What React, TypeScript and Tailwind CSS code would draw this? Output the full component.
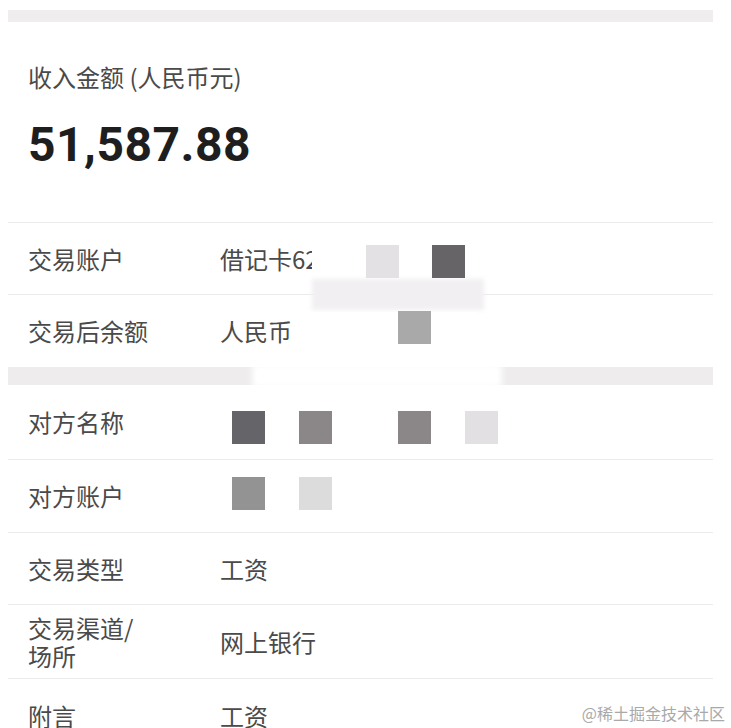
import React from "react";

const cjk = { fontFamily: '"Noto Sans CJK SC", "Noto Sans", sans-serif' };

function Row({
  label,
  value,
  h,
  border = true,
}: {
  label: React.ReactNode;
  value?: React.ReactNode;
  h: string;
  border?: boolean;
}) {
  return (
    <div
      className={`flex items-center pl-5 ${h} ${border ? "border-t border-[#ebebeb]" : ""}`}
    >
      <div className="w-[192px] text-[24px] leading-[30px] text-[#4a4a4a]">{label}</div>
      <div className="text-[24px] leading-[30px] text-[#4a4a4a]">{value}</div>
    </div>
  );
}

function Block({ x, y, c }: { x: number; y: number; c: string }) {
  return (
    <div
      className="absolute w-[33px] h-[33px]"
      style={{ left: x, top: y, background: c }}
    />
  );
}

export default function App() {
  return (
    <div className="relative w-[731px] h-[728px] overflow-hidden bg-white" style={cjk}>
      <div className="ml-2 w-[705px]">
        <div className="mt-[10px] h-[12px] bg-[#efeded]" />
        <div className="h-[200px] pl-5 pt-[40px]">
          <div className="text-[24px] leading-[30px] text-[#4a4a4a]">收入金额 (人民币元)</div>
          <div
            className="mt-[25px] text-[48px] leading-[56px] font-bold text-[#1e1e1e] tracking-[0.5px]"
            style={{ fontFamily: 'Roboto, "Noto Sans", sans-serif' }}
          >
            51,587.88
          </div>
        </div>
        <Row h="h-[72px]" label="交易账户" value="借记卡62" />
        <Row h="h-[73px]" label="交易后余额" value="人民币" />
        <div className="h-[18px] bg-[#eeecec]" />
        <Row h="h-[74px]" border={false} label="对方名称" />
        <Row h="h-[73px]" label="对方账户" />
        <Row h="h-[72px]" label="交易类型" value="工资" />
        <Row
          h="h-[74px]"
          label={
            <div>
              <div className="leading-[28px]">交易渠道/</div>
              <div className="leading-[28px]">场所</div>
            </div>
          }
          value="网上银行"
        />
        <Row h="h-[74px]" label="附言" value="工资" />
      </div>

      {/* redaction mosaic overlays */}
      <div className="absolute left-[312px] top-[246px] w-[60px] h-[34px] bg-white" />
      <div className="absolute left-[312px] top-[279px] w-[172px] h-[31px] bg-[#f1eff1] blur-[2px]" />
      <div className="absolute left-[298px] top-[312px] w-[180px] h-[50px] bg-white" />
      <div className="absolute left-[252px] top-[364px] w-[250px] h-[24px] bg-white blur-[3px]" />
      <Block x={366} y={245} c="#e3e1e3" />
      <Block x={432} y={245} c="#666466" />
      <Block x={398} y={311} c="#a9a9a9" />
      <Block x={232} y={411} c="#656469" />
      <Block x={299} y={411} c="#8b8789" />
      <Block x={398} y={411} c="#8b8688" />
      <Block x={465} y={411} c="#e2e0e2" />
      <Block x={232} y={477} c="#939393" />
      <Block x={299} y={477} c="#dcdcdc" />

      <div className="absolute right-[6px] bottom-[5px] text-[16px] leading-[20px] text-[#a9a9a9]">
        @稀土掘金技术社区
      </div>
    </div>
  );
}
